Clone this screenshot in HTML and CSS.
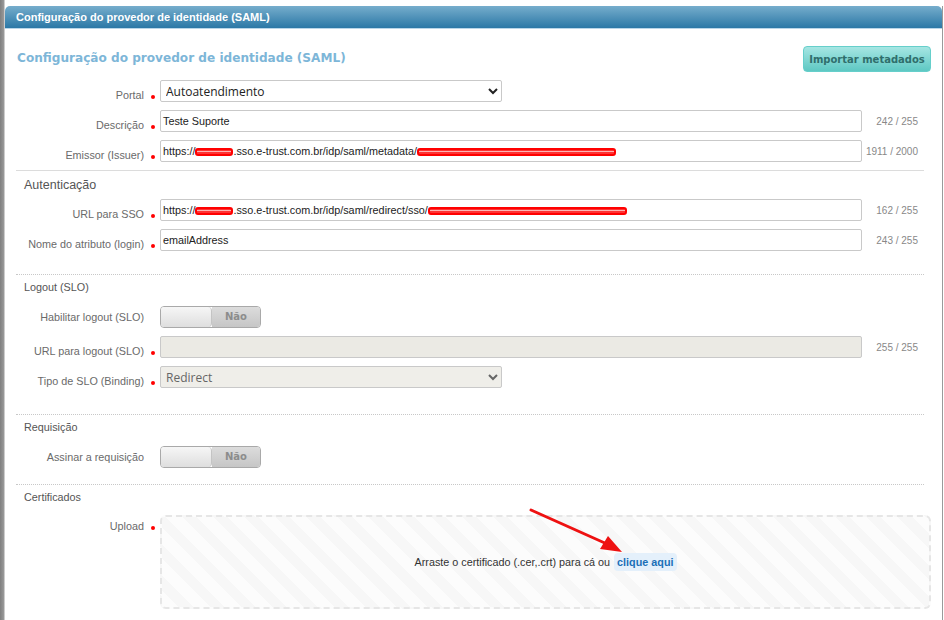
FILE: index.html
```html
<!DOCTYPE html>
<html lang="pt-BR">
<head>
    <meta charset="UTF-8">
    <meta name="viewport" content="width=device-width, initial-scale=1.0">
    <title>Configuração do provedor de identidade (SAML)</title>
    <link rel="stylesheet" href="styles.css">
</head>
<body>
    <div class="window">
        <div class="titlebar">Configuração do provedor de identidade (SAML)</div>
        <div class="content">
            <div class="page-head">
                <h1>Configuração do provedor de identidade (SAML)</h1>
                <button class="btn-import">Importar metadados</button>
            </div>

            <div class="section">
                <div class="row">
                    <label>Portal</label>
                    <span class="req"></span>
                    <select class="select">
                        <option selected>Autoatendimento</option>
                        <option>Portal do colaborador</option>
                    </select>
                </div>
                <div class="row">
                    <label>Descrição</label>
                    <span class="req"></span>
                    <div class="field">Teste Suporte</div>
                    <span class="count">242 / 255</span>
                </div>
                <div class="row">
                    <label>Emissor (Issuer)</label>
                    <span class="req"></span>
                    <div class="field">https://<span class="redact w38"></span>.sso.e-trust.com.br/idp/saml/metadata/<span class="redact w199"></span></div>
                    <span class="count">1911 / 2000</span>
                </div>
            </div>

            <hr class="rule solid">

            <div class="section auth">
                <div class="section-title big">Autenticação</div>
                <div class="row">
                    <label>URL para SSO</label>
                    <span class="req"></span>
                    <div class="field">https://<span class="redact w38"></span>.sso.e-trust.com.br/idp/saml/redirect/sso/<span class="redact w199"></span></div>
                    <span class="count">162 / 255</span>
                </div>
                <div class="row">
                    <label>Nome do atributo (login)</label>
                    <span class="req"></span>
                    <div class="field">emailAddress</div>
                    <span class="count">243 / 255</span>
                </div>
            </div>

            <hr class="rule">

            <div class="section logout">
                <div class="section-title">Logout (SLO)</div>
                <div class="row switch-row">
                    <label>Habilitar logout (SLO)</label>
                    <span></span>
                    <div class="toggle"><span class="knob"></span><span class="state">Não</span></div>
                </div>
                <div class="row">
                    <label>URL para logout (SLO)</label>
                    <span class="req"></span>
                    <div class="field disabled"></div>
                    <span class="count">255 / 255</span>
                </div>
                <div class="row">
                    <label>Tipo de SLO (Binding)</label>
                    <span class="req"></span>
                    <select class="select" disabled>
                        <option selected>Redirect</option>
                        <option>POST</option>
                    </select>
                </div>
            </div>

            <hr class="rule">

            <div class="section request">
                <div class="section-title">Requisição</div>
                <div class="row switch-row">
                    <label>Assinar a requisição</label>
                    <span></span>
                    <div class="toggle"><span class="knob"></span><span class="state">Não</span></div>
                </div>
            </div>

            <hr class="rule">

            <div class="section certs">
                <div class="section-title">Certificados</div>
                <div class="row upload-row">
                    <label>Upload</label>
                    <span class="req"></span>
                    <div class="dropzone">
                        <span>Arraste o certificado (.cer,.crt) para cá ou</span>
                        <a class="pick" href="#">clique aqui</a>
                    </div>
                </div>
            </div>
        </div>
    </div>

    <!-- seta de destaque sobre o link de upload -->
    <svg class="callout" width="944" height="620" viewBox="0 0 944 620">
        <line x1="531" y1="510" x2="607" y2="544" stroke="#ee1111" stroke-width="3" stroke-linecap="round"/>
        <polygon points="622,552 600,549 608,536" fill="#ee1111"/>
    </svg>
</body>
</html>
```

FILE: styles.css
```css
body {
    margin: 0;
    padding: 6px 0 0 5px;
    font-family: "Liberation Sans", Arial, sans-serif;
    font-size: 10.8px;
    color: #333;
    background: linear-gradient(to right, #7f7f7f 0, #9a9a9a 4px, #fff 5px);
    height: 614px;
    overflow: hidden;
    position: relative;
}
.window {
    width: 937px;
    height: 100%;
    background: #fff;
    border-right: 1px solid #9a9a9a;
}
.titlebar {
    height: 23px;
    line-height: 22px;
    padding-left: 11px;
    color: #fff;
    font-weight: bold;
    font-size: 11px;
    background: linear-gradient(to bottom, #76adcc, #2b78a6);
    border-radius: 5px 5px 0 0;
    border-bottom: 1px solid #b9d6e8;
    box-sizing: border-box;
}
.content {
    padding: 0 11px;
}
.page-head {
    display: flex;
    justify-content: space-between;
    align-items: center;
    margin-top: 17px;
    height: 26px;
}
.page-head h1 {
    margin: 0 0 2px 1px;
    font-family: "DejaVu Sans", Verdana, sans-serif;
    font-size: 12.1px;
    color: #7db6d8;
}
.btn-import {
    height: 26px;
    width: 128px;
    padding: 0;
    font-family: "DejaVu Sans", Verdana, sans-serif;
    font-size: 10px;
    font-weight: bold;
    color: #2f6e6c;
    background: linear-gradient(to bottom, #a6e6e3, #5ec8c3);
    border: 1px solid #66cfcb;
    border-radius: 4px;
}
.section {
    padding-top: 8px;
}
.row {
    display: grid;
    grid-template-columns: 128px 16px 702px 1fr;
    min-height: 22px;
    margin-bottom: 8px;
}
.row label {
    align-self: end;
    text-align: right;
    line-height: 14px;
    color: #6a6a6a;
}
.req {
    align-self: end;
    width: 4px;
    height: 4px;
    margin: 0 0 3px 7px;
    border-radius: 50%;
    background: #f00;
}
.field {
    height: 22px;
    box-sizing: border-box;
    border: 1px solid #c9c9c9;
    border-radius: 2px;
    padding: 0 2px;
    line-height: 20px;
    color: #222;
    white-space: nowrap;
    overflow: hidden;
}
.field.disabled {
    background: #ebeae4;
}
/* trecho ocultado da URL */
.redact {
    display: inline-block;
    height: 8px;
    box-sizing: border-box;
    vertical-align: middle;
    border: 2px solid #f00;
    border-radius: 3px;
    background: linear-gradient(to bottom, #f33 1px, #ffb3b3 1px, #ffb3b3 2px, #f33 2px);
}
.w38 { width: 38px; }
.w199 { width: 199px; }
.select {
    width: 342px;
    height: 22px;
    font-family: "Open Sans", sans-serif;
    font-size: 12px;
    color: #222;
    background: #fff;
    border: 1px solid #c9c9c9;
    border-radius: 2px;
    padding: 0 1px;
}
.select:disabled {
    background: #efeee9;
    color: #666;
    opacity: 1;
}
.count {
    align-self: center;
    text-align: right;
    padding-right: 13px;
    font-size: 10px;
    color: #888;
}
.rule {
    margin: 0 7px 0 0;
    border: 0;
    border-top: 1px dotted #c8c8c8;
}
.rule.solid {
    border-top: 1px solid #dcdcdc;
}
.section-title {
    padding-left: 8px;
    line-height: 15px;
    color: #555;
}
.section-title.big {
    font-size: 12.5px;
    line-height: 16px;
    margin-bottom: 6px;
}
.auth {
    padding-top: 6px;
    padding-bottom: 15px;
}
.logout, .request, .certs {
    padding-top: 5px;
}
.logout .section-title,
.request .section-title {
    margin-bottom: 11px;
}
.logout {
    padding-bottom: 18px;
}
.request {
    padding-bottom: 8px;
}
.certs .section-title {
    margin-bottom: 10px;
}
.switch-row label {
    align-self: center;
}
.toggle {
    display: flex;
    width: 101px;
    height: 22px;
    box-sizing: border-box;
    border: 1px solid #a9a9a9;
    border-radius: 4px;
    overflow: hidden;
}
.knob {
    width: 50px;
    background: linear-gradient(to bottom, #f6f6f6, #dedede);
    border-right: 1px solid #c4c4c4;
    border-radius: 0 4px 4px 0;
}
.state {
    flex: 1;
    text-align: center;
    line-height: 20px;
    font-family: "DejaVu Sans", Verdana, sans-serif;
    font-size: 10px;
    font-weight: bold;
    color: #8c8c8c;
    background: linear-gradient(to bottom, #dcdcdc, #c6c6c6);
}
.upload-row label,
.upload-row .req {
    align-self: start;
}
.upload-row label {
    padding-top: 4px;
}
.upload-row .req {
    margin-top: 11px;
}
.dropzone {
    grid-column: 3 / -1;
    height: 94px;
    box-sizing: border-box;
    border: 2px dashed #e6e6e6;
    border-radius: 6px;
    display: flex;
    align-items: center;
    justify-content: center;
    gap: 4px;
    color: #333;
    background: repeating-linear-gradient(45deg, #fcfcfc 0, #fcfcfc 12px, #f7f7f7 12px, #f7f7f7 22px);
}
.pick {
    padding: 3px 3px;
    border-radius: 4px;
    background: #e4f0fb;
    color: #1b6fb7;
    font-weight: bold;
    text-decoration: none;
}
.callout {
    position: absolute;
    left: 0;
    top: 0;
    pointer-events: none;
}
```
